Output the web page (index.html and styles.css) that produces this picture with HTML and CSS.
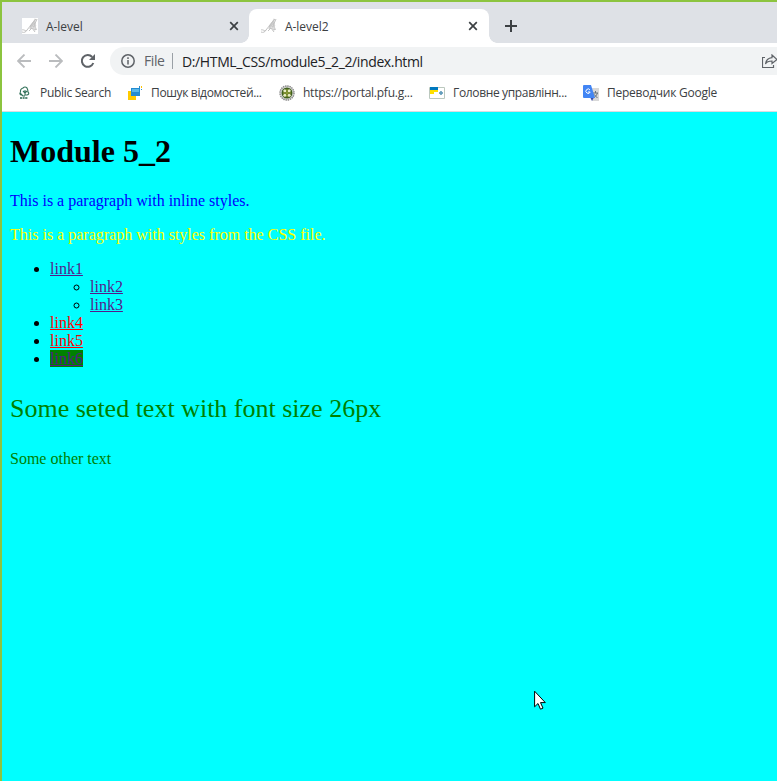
FILE: index.html
```
<!DOCTYPE html>
<html lang="en">
<head>
<meta charset="utf-8">
<title>A-level2</title>
<link rel="stylesheet" href="styles.css">
</head>
<body>
<div class="window">
  <header class="tabs">
    <div class="tab">
      <svg class="favicon" viewBox="0 0 16 16"><path fill="#fff" d="M0 0h16v16H0z"/><g fill="none" stroke="#c2c2c2"><path stroke-width="1.800" stroke="#d2d2d2" d="M8 11 12.500 3l1 9M8 10l6-3"/><path d="M0 14c2 1 4 0 5-2l8-10M15 1l-3 7c-1 5 1 4 3 3M0 12c2-1 4 2 5 0m3-4 6-7m-6 8 5-4m-6 8 3-3 3 4"/></g></svg>
      <span class="title">A-level</span>
      <svg class="close" viewBox="0 0 10 10"><path d="m1.200 1.200 7.600 7.600m0-7.600L1.200 8.800"/></svg>
    </div>
    <div class="tab active">
      <svg class="favicon" viewBox="0 0 16 16"><g fill="none" stroke="#c2c2c2"><path stroke-width="1.800" stroke="#d2d2d2" d="M8 11 12.500 3l1 9M8 10l6-3"/><path d="M0 14c2 1 4 0 5-2l8-10M15 1l-3 7c-1 5 1 4 3 3M0 12c2-1 4 2 5 0m3-4 6-7m-6 8 5-4m-6 8 3-3 3 4"/></g></svg>
      <span class="title">A-level2</span>
      <svg class="close" viewBox="0 0 10 10"><path d="m1.200 1.200 7.600 7.600m0-7.600L1.200 8.800"/></svg>
    </div>
    <svg class="plus" viewBox="0 0 12 12"><path d="M6 0v12M0 6h12"/></svg>
  </header>
  <nav class="toolbar">
    <svg class="arrow" viewBox="0 0 14 14"><path d="M14 7H1m6.500-6.500L1 7l6.500 6.500"/></svg>
    <svg class="arrow" viewBox="0 0 14 14"><path d="M0 7h13M6.500 .5 13 7l-6.500 6.500"/></svg>
    <svg class="reload" viewBox="0 0 14 14"><path class="arc" d="M12.300 9A5.900 5.900 0 1 1 11.200 3"/><path d="M14 0v6H8z"/></svg>
    <div class="address">
      <svg class="info" viewBox="0 0 14 14"><circle cx="7" cy="7" r="6.200"/><path d="M7 6v4.500M7 3.300v1.600"/></svg>
      <span class="scheme">File</span>
      <span class="url">D:/HTML_CSS/module5_2_2/index.html</span>
      <svg class="share" viewBox="0 0 16 14"><path d="M3 3.500H.5v10h11V11M10 1l5 4.500-5 4V7C6.500 7 4.500 8 3.500 10 4 6 6.500 4 10 3.700z"/></svg>
    </div>
  </nav>
  <nav class="bookmarks">
    <a class="b1"><svg viewBox="0 0 16 16"><path fill="none" stroke="#34735b" stroke-width="1.100" d="M6 10H5Q3 9 4.500 7 4 4 7 3q2-2 4 0 1 2 1 4 2 2-1 3H9V5M4 8l2 2 1 1h2m-2-5 2 2 2-2"/><path stroke="#5c8c79" stroke-width="2" stroke-dasharray="2 .6" d="M4 13h8"/></svg><span>Public Search</span></a>
    <a class="b2"><svg viewBox="0 0 16 16"><path fill="#ffcb00" d="M1 6h5v5h3v4H1z"/><path fill="#238bd0" d="M4 3h9v8H4z"/><path fill="#59b7e8" d="M5 4h7v3H5z"/><path fill="#2b8fd0" d="M12 1h1v2h-1zM14 4h1v1h-1z"/><path fill="#ffc600" d="M14 1h1v2h-1z"/></svg><span>Пошук відомостей...</span></a>
    <a class="b3"><svg viewBox="0 0 16 16"><circle cx="8" cy="8" r="7" fill="#ddd" stroke="#8b8b8b" stroke-width="1.500" stroke-dasharray="1.500 .7"/><circle cx="8" cy="8" r="5.500" fill="#41601d"/><g fill="#e9edc3"><circle cx="5.800" cy="5.800" r="1.500"/><circle cx="10.200" cy="5.800" r="1.500"/><circle cx="5.800" cy="10.200" r="1.500"/><circle cx="10.200" cy="10.200" r="1.500"/></g><path stroke="#a1ab39" d="M8 4v8M4 8h8"/></svg><span>https://portal.pfu.g...</span></a>
    <a class="b4"><svg viewBox="0 0 16 16"><path fill="#fff" stroke="#bbc8be" d="M.5 2.500h15v11H.5z"/><path fill="#0078be" d="M1 2h8v3H1z"/><path fill="#ffe000" d="M1 5h8v2H5v2H1z"/><circle cx="12" cy="8" r="1.300" fill="#a9cbdc" stroke="#347ea6"/></svg><span>Головне управлінн...</span></a>
    <a class="b5"><svg viewBox="0 0 16 16"><path fill="#d8d8d8" d="M7 3h9v13H9z"/><path stroke="#65717b" fill="none" d="M10 8h5m-2.500-2v2m2 0c-1 3-3 4-4 5m0-4 4 4"/><path fill="#3949ab" d="M7 12h4l-2 4z"/><path fill="#4285f4" d="M1 0h7l4 13H1q-1 0-1-1V1q0-1 1-1z"/><path fill="none" stroke="#fff" d="M7 5a2.200 2.200 0 1 0 .2 2H5"/></svg><span>Переводчик Google</span></a>
  </nav>
  <main class="page">
    <h1>Module 5_2</h1>
    <p class="blue">This is a paragraph with inline styles.</p>
    <p class="yellow">This is a paragraph with styles from the CSS file.</p>
    <ul>
      <li><a>link1</a>
        <ul><li><a>link2</a></li><li><a>link3</a></li></ul>
      </li>
      <li><a class="red">link4</a></li>
      <li><a class="red">link5</a></li>
      <li><a class="marked">link6</a></li>
    </ul>
    <p class="large">Some seted text with font size 26px</p>
    <p class="green">Some other text</p>
  </main>
  <svg class="cursor" viewBox="0 0 12 20"><path fill="#fff" stroke="#000" d="M.6 1.200v15.600L4 13.500l2.500 5.700 2.500-1.100-2.500-5.500h4.800z"/></svg>
</div>
</body>
</html>
```
FILE: styles.css
```
* { box-sizing: border-box; }
body { margin: 0; }
svg { display: block; flex: none; }
.window {
  position: relative;
  height: 781px;
  overflow: hidden;
  border-top: 2px solid #8cc43f;
  border-left: 2px solid #8cc43f;
  background: #fff;
  font-family: "Open Sans", "Noto Sans", sans-serif;
  font-size: 12px;
  color: #3c4043;
  display: flex;
  flex-direction: column;
}
.tabs { display: flex; height: 41px; flex: none; background: #dee1e6; padding-top: 7px; }
.tab { position: relative; display: flex; align-items: center; width: 247px; height: 34px; padding: 0 10px 0 20px; }
.tab.active { width: 240px; padding: 0 11px 0 12px; background: #fff; border-radius: 8px 8px 0 0; }
.tab.active::before, .tab.active::after { content: ""; position: absolute; bottom: 0; width: 8px; height: 8px; }
.tab.active::before { left: -8px; background: radial-gradient(circle at 0 0, transparent 7.500px, #fff 8px); }
.tab.active::after { right: -8px; background: radial-gradient(circle at 100% 0, transparent 7.500px, #fff 8px); }
.favicon { width: 16px; height: 16px; }
.title { margin-left: 8px; flex: 1; white-space: nowrap; letter-spacing: -.05px; }
.close { width: 10px; height: 10px; stroke: #3c4043; stroke-width: 1.700; }
.plus { width: 12px; height: 12px; margin: 11px 0 0 16px; stroke: #3c4043; stroke-width: 2; }
.toolbar { display: flex; align-items: center; height: 36px; flex: none; padding-left: 15px; }
.arrow { width: 14px; height: 14px; margin-right: 18px; fill: none; stroke: #babcbe; stroke-width: 1.800; }
.reload { width: 14px; height: 14px; fill: #5f6368; }
.reload .arc { fill: none; stroke: #5f6368; stroke-width: 2; }
.address { display: flex; align-items: center; flex: 1; min-width: 0; height: 28px; margin-left: 15px; padding-left: 11px; border-radius: 14px 0 0 14px; background: #f1f3f4; font-size: 14px; overflow: hidden; }
.info { width: 14px; height: 14px; fill: none; stroke: #5f6368; stroke-width: 1.500; }
.scheme { width: 29px; height: 16px; flex: none; line-height: 16px; margin-left: 9px; border-right: 1px solid #9aa0a6; color: #5f6368; letter-spacing: -.4px; }
.url { width: 580px; flex: none; margin-left: 9px; color: #202124; font-size: 14px; letter-spacing: -.37px; white-space: nowrap; }
.share { width: 16px; height: 14px; fill: none; stroke: #5f6368; stroke-width: 1.200; }
.bookmarks { display: flex; align-items: center; height: 33px; flex: none; padding: 0 0 5px 14px; border-bottom: 1px solid #dadce0; }
.bookmarks a { display: flex; align-items: center; white-space: nowrap; flex: none; }
.bookmarks svg { width: 16px; height: 16px; margin-right: 8px; }
.b1 { width: 111px; }
.b2 { width: 152px; }
.b3 { width: 150px; }
.b4 { width: 154px; }
.bookmarks span { letter-spacing: -.3px; }
.bookmarks .b2 span, .bookmarks .b4 span { letter-spacing: -.35px; }
.bookmarks .b3 span, .bookmarks .b5 span { letter-spacing: -.25px; }
.page { flex: 1; padding: 21px 8px 0; background: #0ff; color: #000; font: 16px/18px "Liberation Serif", "Times New Roman", serif; }
h1 { margin: 0 0 22px; font-size: 32px; line-height: 37px; }
p { margin: 16px 0; }
ul { margin: 16px 0; padding-left: 40px; }
ul ul { margin: 0; }
.page a { color: #551a8b; text-decoration: underline; }
.blue { color: #00f; }
.yellow { color: #ff0; }
.page .red { color: #f00; }
.page .marked { background: #008000; }
.large { margin: 26px 0; font-size: 26px; line-height: 30px; color: #008000; }
.green { color: #008000; }
.cursor { position: absolute; left: 532px; top: 688px; width: 12px; height: 20px; }
```
